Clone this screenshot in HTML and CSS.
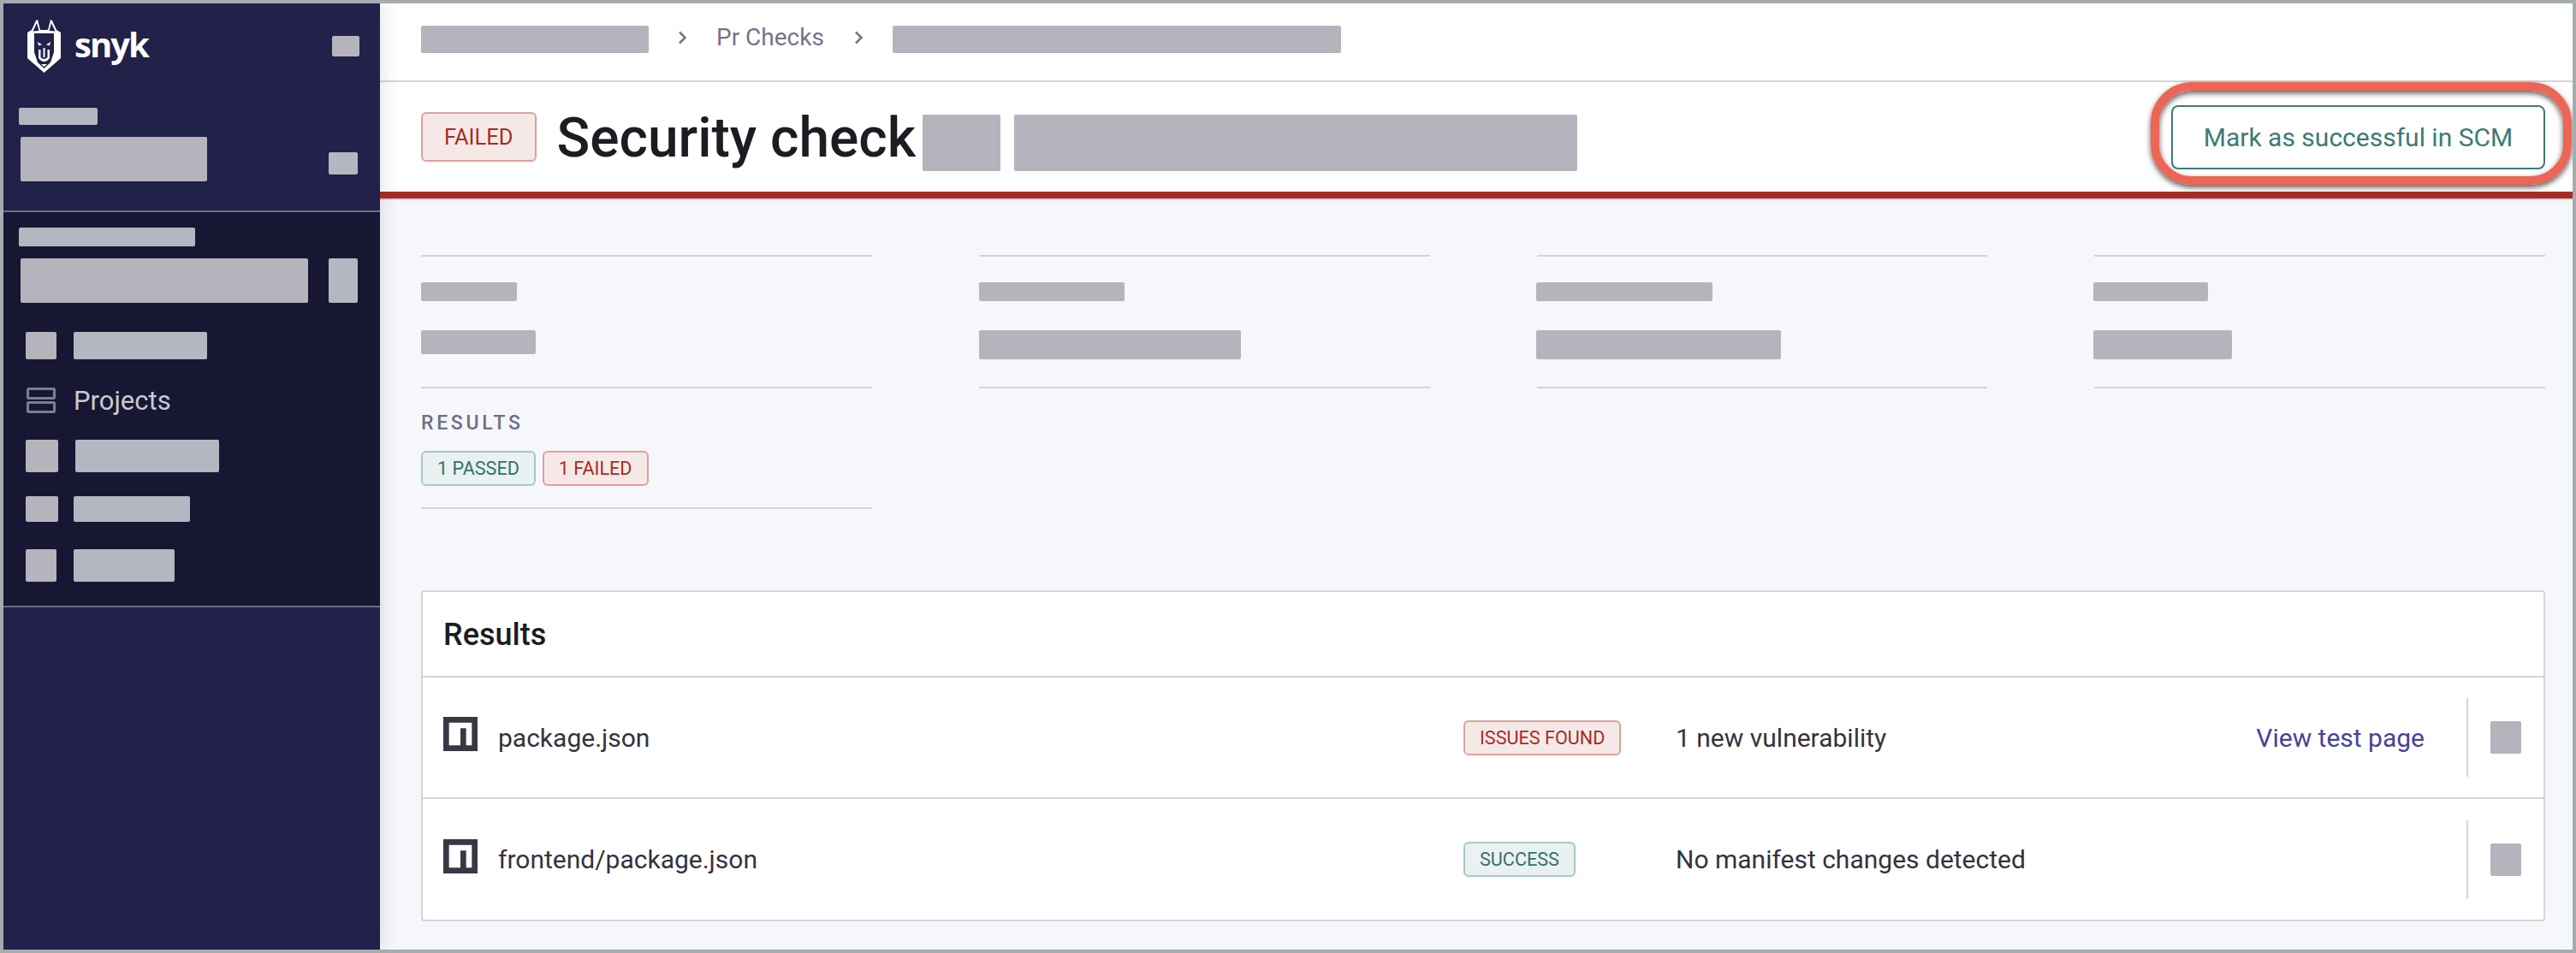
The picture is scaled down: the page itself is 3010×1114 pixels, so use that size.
FILE: index.html
```html
<!DOCTYPE html>
<html lang="en">
<head>
  <meta charset="UTF-8" />
  <meta name="viewport" content="width=device-width, initial-scale=1" />
  <title>Security check - Snyk</title>
  <link rel="stylesheet" href="styles.css">
</head>
<body>
  <div class="frame">
    <aside class="sidebar">
      <div class="side-top">
        <div class="brand">
          <a class="logo" href="#">
            <svg class="logo-mark" viewBox="0 0 41 62" aria-hidden="true">
              <path fill="#fff" d="M1 15 L6 12 L11 1 L13 0 L16 12 L25 12 L28 0 L30 1 L35 12 L40 15 L40 45 L20.500 62 L1 45 Z"/>
              <path fill="#22214a" d="M7.500 13.500 L12 4 L14.500 13 Z M33.500 13.500 L29 4 L26.500 13 Z"/>
              <path fill="#22214a" d="M9 16 L32 16 L32 38 L28 50 L20.500 57 L13 50 L9 38 Z"/>
              <path fill="#fff" d="M12.500 26 L18 29 L14.500 30.500 Z M28.500 26 L23 29 L26.500 30.500 Z"/>
              <path fill="#fff" d="M14 35 L16.500 35 L16.500 44 Q20.500 48 24.500 44 L24.500 35 L27 35 L27 45 Q20.500 53 14 45 Z"/>
              <path fill="#fff" d="M19.500 33 H21.500 V44 H19.500 Z M17 52 L24 52 L20.500 55 Z"/>
            </svg>
            <span class="logo-text">snyk</span>
          </a>
          <span class="blur blur-toggle"></span>
        </div>
        <span class="blur blur-cool blur-group-label"></span>
        <div class="picker">
          <span class="blur blur-group-name"></span>
          <span class="blur blur-cool blur-group-caret"></span>
        </div>
      </div>
      <div class="side-org">
        <span class="blur blur-cool blur-org-label"></span>
        <div class="picker picker-org">
          <span class="blur blur-org-name"></span>
          <span class="blur blur-cool blur-group-caret"></span>
        </div>
        <nav class="nav">
          <a class="nav-item nav-first" href="#">
            <span class="blur nav-icon"></span>
            <span class="blur blur-cool nav-label-dash"></span>
          </a>
          <a class="nav-item nav-projects" href="#">
            <svg class="nav-svg" viewBox="0 0 34 30" aria-hidden="true">
              <rect x="1.500" y="1.500" width="31" height="11" rx="1" />
              <rect x="1.500" y="17.500" width="31" height="11" rx="1" />
            </svg>
            <span class="nav-text">Projects</span>
          </a>
          <a class="nav-item nav-third" href="#">
            <span class="blur nav-icon nav-icon-wide"></span>
            <span class="blur blur-cool nav-label-integrations"></span>
          </a>
          <a class="nav-item nav-fourth" href="#">
            <span class="blur nav-icon nav-icon-wide"></span>
            <span class="blur blur-cool nav-label-members"></span>
          </a>
          <a class="nav-item nav-fifth" href="#">
            <span class="blur nav-icon"></span>
            <span class="blur blur-cool nav-label-settings"></span>
          </a>
        </nav>
      </div>
    </aside>

    <main class="main">
      <div class="breadcrumb">
        <span class="blur crumb-project"></span>
        <svg class="chevron" viewBox="0 0 11 16" aria-hidden="true"><path d="M2 1.500 L8.500 8 L2 14.500" /></svg>
        <a class="crumb-link" href="#">Pr Checks</a>
        <svg class="chevron" viewBox="0 0 11 16" aria-hidden="true"><path d="M2 1.500 L8.500 8 L2 14.500" /></svg>
        <span class="blur crumb-current"></span>
      </div>

      <header class="title-bar">
        <span class="badge badge-failed badge-title">FAILED</span>
        <h1>Security check</h1>
        <span class="blur title-blur-short"></span>
        <span class="blur title-blur-long"></span>
        <button class="scm-btn">Mark as successful in SCM</button>
        <span class="callout"></span>
      </header>

      <section class="meta-grid">
        <div class="meta-col">
          <div class="meta-item">
            <span class="blur label-a"></span>
            <span class="blur value-a"></span>
          </div>
          <div class="meta-item meta-results">
            <div class="meta-heading">RESULTS</div>
            <div class="badge-row">
              <span class="badge badge-passed">1 PASSED</span>
              <span class="badge badge-failed">1 FAILED</span>
            </div>
          </div>
        </div>
        <div class="meta-col">
          <div class="meta-item">
            <span class="blur label-b"></span>
            <span class="blur value-b"></span>
          </div>
        </div>
        <div class="meta-col">
          <div class="meta-item">
            <span class="blur label-c"></span>
            <span class="blur value-c"></span>
          </div>
        </div>
        <div class="meta-col">
          <div class="meta-item">
            <span class="blur label-d"></span>
            <span class="blur value-d"></span>
          </div>
        </div>
      </section>

      <section class="card">
        <h2 class="card-title">Results</h2>
        <div class="result-row">
          <svg class="npm" viewBox="0 0 18 18" aria-hidden="true">
            <path fill="#383844" d="M0 0 H18 V18 H0 Z M3 3 V15 H9 V6 H12 V15 H15 V3 Z" fill-rule="evenodd" />
          </svg>
          <span class="file-name">package.json</span>
          <span class="status-cell"><span class="badge badge-failed">ISSUES FOUND</span></span>
          <span class="summary">1 new vulnerability</span>
          <a class="test-link" href="#">View test page</a>
          <span class="row-action"><span class="blur row-blur"></span></span>
        </div>
        <div class="result-row">
          <svg class="npm" viewBox="0 0 18 18" aria-hidden="true">
            <path fill="#383844" d="M0 0 H18 V18 H0 Z M3 3 V15 H9 V6 H12 V15 H15 V3 Z" fill-rule="evenodd" />
          </svg>
          <span class="file-name">frontend/package.json</span>
          <span class="status-cell"><span class="badge badge-passed">SUCCESS</span></span>
          <span class="summary">No manifest changes detected</span>
          <span class="row-action"><span class="blur row-blur"></span></span>
        </div>
      </section>
    </main>
  </div>
</body>
</html>
```

FILE: styles.css
```css
* {
  box-sizing: border-box;
}
body {
  margin: 0;
  font-family: Roboto, sans-serif;
  color: #333340;
  background-color: #f6f7fb;
}
a {
  text-decoration: none;
}
.frame {
  display: flex;
  height: 1114px;
  border: 4px solid #a4acaf;
  overflow: hidden;
}

/* redacted text blocks */
.blur {
  display: block;
  flex: none;
  background-color: #b6b3bd;
  border-radius: 2px;
}
.blur-cool {
  background-color: #b4b7bf;
}

/* sidebar */
.sidebar {
  position: relative;
  z-index: 1;
  flex: none;
  width: 440px;
  background-color: #22214a;
  box-shadow: 0 0 22px rgba(34, 33, 74, 0.16);
}
.side-top {
  height: 242px;
  padding-top: 19px;
}
.brand {
  display: flex;
  align-items: flex-start;
  justify-content: space-between;
  padding: 0 24px 0 27px;
}
.logo {
  display: flex;
  align-items: flex-start;
  gap: 15px;
}
.logo-mark {
  display: block;
  width: 41px;
  height: 62px;
}
.logo-text {
  font-family: "Open Sans", sans-serif;
  font-size: 40px;
  font-weight: 700;
  line-height: 50px;
  letter-spacing: -2px;
  color: #fff;
  margin-top: 4px;
}
.blur-toggle {
  width: 32px;
  height: 24px;
  margin-top: 19px;
}
.blur-group-label {
  width: 92px;
  height: 20px;
  margin: 41px 0 0 18px;
}
.picker {
  display: flex;
  justify-content: space-between;
  padding: 14px 26px 0 20px;
}
.blur-group-name {
  width: 218px;
  height: 52px;
}
.blur-group-caret {
  width: 34px;
  height: 26px;
  margin-top: 18px;
}
.side-org {
  height: 464px;
  background-color: #171733;
  border-top: 2px solid #6d6d80;
  border-bottom: 2px solid #6d6d80;
  padding-top: 18px;
}
.blur-org-label {
  width: 206px;
  height: 22px;
  margin-left: 18px;
}
.picker-org {
  align-items: stretch;
}
.blur-org-name {
  width: 336px;
  height: 52px;
}
.picker-org .blur-group-caret {
  height: 52px;
  margin-top: 0;
}
.nav {
  padding: 34px 0 0 26px;
}
.nav-item {
  display: flex;
  align-items: stretch;
}
.nav-icon {
  width: 36px;
  margin-right: 20px;
}
.nav-icon-wide {
  width: 38px;
  margin-right: 20px;
}
.nav-first {
  height: 32px;
}
.nav-label-dash {
  width: 156px;
}
.nav-projects {
  height: 34px;
  margin-top: 31px;
  align-items: center;
}
.nav-svg {
  width: 34px;
  height: 30px;
  margin: 0 21px 0 1px;
  fill: none;
  stroke: #7d7d90;
  stroke-width: 3;
}
.nav-text {
  font-size: 31px;
  line-height: 34px;
  margin-top: 2px;
  color: #c9c9d3;
}
.nav-third {
  height: 38px;
  margin-top: 29px;
}
.nav-label-integrations {
  width: 168px;
}
.nav-fourth {
  height: 30px;
  margin-top: 28px;
}
.nav-fourth .nav-icon-wide {
  margin-right: 18px;
}
.nav-label-members {
  width: 136px;
}
.nav-fifth {
  height: 38px;
  margin-top: 32px;
}
.nav-label-settings {
  width: 118px;
}

/* main */
.main {
  flex: 1;
  min-width: 0;
}
.breadcrumb {
  display: flex;
  align-items: center;
  height: 92px;
  padding: 0 0 6px 48px;
  background-color: #fff;
  border-bottom: 2px solid #d3d3dc;
}
.crumb-project {
  width: 266px;
  height: 32px;
}
.crumb-current {
  width: 524px;
  height: 32px;
}
.chevron {
  flex: none;
  width: 11px;
  height: 16px;
  margin: 0 0 4px 34px;
  fill: none;
  stroke: #74748a;
  stroke-width: 2.500;
}
.crumb-link {
  margin: 0 0 5px 34px;
  font-size: 28px;
  color: #74748a;
}
.crumb-link + .chevron {
  margin-left: 35px;
}
.crumb-link + .chevron + .crumb-current {
  margin-left: 34px;
}
.title-bar {
  position: relative;
  display: flex;
  align-items: center;
  height: 136px;
  padding: 0 32px 0 48px;
  background-color: #fff;
  border-bottom: 8px solid #a92b23;
}
.title-bar h1 {
  margin: 4px 0 0 24px;
  font-size: 64px;
  font-weight: 500;
  line-height: 72px;
  color: #1c1c22;
}
.title-blur-short {
  width: 91px;
  height: 66px;
  margin: 14px 0 0 8px;
}
.title-blur-long {
  width: 658px;
  height: 66px;
  margin: 14px 0 0 16px;
}
.badge {
  display: inline-block;
  flex: none;
  height: 41px;
  padding: 0 17px;
  border: 2px solid;
  border-radius: 6px;
  font-size: 21.600px;
  line-height: 38px;
}
.badge-failed {
  color: #a92b23;
  background-color: #f5e9e8;
  border-color: #dfa09c;
}
.badge-passed {
  color: #33706d;
  background-color: #e9f2f1;
  border-color: #a5c9c7;
}
.badge-title {
  height: 58px;
  padding: 0 25px;
  font-size: 25.500px;
  line-height: 54px;
}
.scm-btn {
  margin-left: auto;
  width: 437px;
  height: 75px;
  background-color: #fff;
  border: 2px solid #3d7a78;
  border-radius: 8px;
  font-family: Roboto, sans-serif;
  font-size: 30px;
  color: #3d7a78;
}
/* annotation drawn over the screenshot */
.callout {
  position: absolute;
  top: 0;
  right: 1px;
  width: 492px;
  height: 120px;
  border: 10px solid #ec6555;
  border-radius: 48px;
  box-shadow: 0 3px 6px rgba(0, 0, 0, 0.65), inset 0 3px 6px rgba(0, 0, 0, 0.65);
}

/* details */
.meta-grid {
  display: grid;
  grid-template-columns: repeat(4, 1fr);
  column-gap: 125px;
  align-items: start;
  padding: 64px 32px 0 48px;
  border-top: 2px solid #d3d3dc;
}
.meta-item {
  height: 156px;
  padding-top: 30px;
  border-top: 2px solid #d3d3dc;
  border-bottom: 2px solid #d3d3dc;
}
.meta-results {
  height: 141px;
  padding-top: 27px;
  border-top: 0;
}
.meta-heading {
  font-size: 23px;
  font-weight: 500;
  line-height: 28px;
  letter-spacing: 3.700px;
  color: #6f6f85;
}
.badge-row {
  display: flex;
  gap: 8px;
  margin-top: 18px;
}
.meta-item .blur:first-child {
  height: 22px;
  margin-bottom: 34px;
}
.label-a { width: 112px; }
.value-a { width: 134px; height: 28px; }
.label-b { width: 170px; }
.value-b { width: 306px; height: 34px; }
.label-c { width: 206px; margin-left: -1px; }
.value-c { width: 286px; height: 34px; margin-left: -1px; }
.label-d { width: 134px; margin-left: -1px; }
.value-d { width: 162px; height: 34px; margin-left: -1px; }

/* results card */
.card {
  margin: 95px 32px 0 48px;
  background-color: #fff;
  border: 2px solid #d3d3dc;
  border-radius: 4px;
}
.card-title {
  height: 100px;
  margin: 0;
  padding: 27px 24px 0;
  font-size: 36px;
  font-weight: 500;
  line-height: 46px;
  color: #1c1c22;
  border-bottom: 2px solid #d3d3dc;
}
.result-row {
  display: flex;
  align-items: center;
  height: 142px;
  padding-left: 24px;
  font-size: 30px;
  border-bottom: 2px solid #d3d3dc;
}
.result-row:last-child {
  height: 141px;
  border-bottom: 0;
}
.npm {
  flex: none;
  width: 40px;
  height: 40px;
  margin: -8px 24px 0 0;
}
.file-name {
  width: 1128px;
  flex: none;
}
.status-cell {
  display: flex;
  width: 248px;
  flex: none;
}
.test-link {
  margin-left: auto;
  color: #45439a;
}
.row-action {
  display: flex;
  align-items: center;
  height: 92px;
  margin-left: auto;
  padding-left: 26px;
  margin-right: 26px;
  border-left: 2px solid #d3d3dc;
}
.test-link + .row-action {
  margin-left: 49px;
}
.row-blur {
  width: 36px;
  height: 38px;
}
```
